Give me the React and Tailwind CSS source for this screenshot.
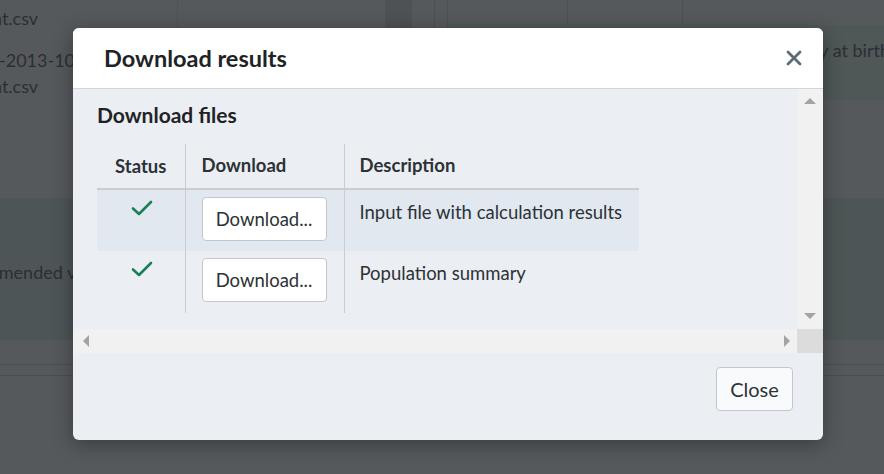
import React from 'react';

const Check = () => (
    <svg width="22" height="16" viewBox="0 0 22 16" fill="none">
        <path d="M2 8.5 L8 14 L20 2" stroke="#1b7f56" strokeWidth="2.6" strokeLinecap="round" strokeLinejoin="round" />
    </svg>
);

const Backdrop = () => (
    <div className="absolute inset-0 bg-[#56595c] text-[#2b2f33] text-[18px]">
        {/* faint page behind the overlay */}
        <div className="flex h-[100px]">
            <div className="w-[178px] border-r border-[#4f5356] flex flex-col pt-[5px] leading-[26px]">
                <span className="-ml-[8px]">nt.csv</span>
                <span className="mt-[16px] -ml-[1px]">-2013-10</span>
                <span className="-ml-[8px]">nt.csv</span>
            </div>
            <div className="w-[207px]" />
            <div className="w-[27px] bg-[#4f5254]" />
            <div className="w-[23px] border-r border-[#4c5053]" />
            <div className="w-[13px] border-r border-[#4c5053]" />
            <div className="flex-1 flex flex-col">
                <div className="h-[25px] flex">
                    <div className="w-[120px] border-r border-[#4c5053]" />
                    <div className="w-[115px] border-r border-[#4c5053]" />
                </div>
                <div className="flex-1 bg-[#4f5757] flex justify-end items-start pt-[12px] overflow-hidden whitespace-nowrap">
                    <span className="-mr-[6px]">y at birth</span>
                </div>
            </div>
        </div>
        <div className="h-[20px] bg-[#55595b]" />
        <div className="h-[78px]" />
        <div className="h-[142px] bg-[#4e5556] flex items-center">
            <span className="-ml-[16px] mt-[6px]">mmended v</span>
        </div>
        <div className="h-[25px] border-b border-[#4a4e51]" />
        <div className="h-[11px] border-b border-[#4a4e51]" />
    </div>
);

export default function App() {
    const rows = [
        { desc: 'Input file with calculation results', shaded: true },
        { desc: 'Population summary', shaded: false },
    ];

    return (
        <div className="relative w-[884px] h-[474px] overflow-hidden" style={{ fontFamily: 'Lato, "Noto Sans", sans-serif' }}>
            <Backdrop />

            {/* modal */}
            <div className="absolute inset-0 pl-[73px] pt-[28px]">
                <div className="w-[750px] h-[412px] rounded-[6px] overflow-hidden bg-[#ebeff3] flex flex-col shadow-[0_4px_20px_rgba(0,0,0,0.35)]">
                    <div className="h-[61px] bg-white border-b border-[#d3d6d9] flex items-center justify-between pl-[31px] pr-[21px]">
                        <h2 className="text-[23.5px] font-bold text-[#1f2326] pt-[1px]">Download results</h2>
                        <svg width="16" height="16" viewBox="0 0 16 16">
                            <path d="M2 2 L14 14 M14 2 L2 14" stroke="#5b6b77" strokeWidth="2.8" strokeLinecap="round" />
                        </svg>
                    </div>

                    <div className="flex h-[240px]">
                        <div className="w-[724px] pl-[24px] pt-[13px]">
                            <h3 className="text-[21px] font-bold text-[#1f2326] leading-[26px]">Download files</h3>
                            <table className="mt-[16px] border-collapse text-[18.5px] text-[#2d3236]">
                                <thead>
                                    <tr className="h-[45px] border-b-2 border-[#c9cdd1]">
                                        <th className="w-[88px] font-bold text-center align-middle pt-[1px]">Status</th>
                                        <th className="w-[159px] font-bold text-left pl-[16px] border-l border-[#c9cdd1]">Download</th>
                                        <th className="w-[295px] font-bold text-left pl-[15px] border-l border-[#c9cdd1]">Description</th>
                                    </tr>
                                </thead>
                                <tbody>
                                    {rows.map((r, i) => (
                                        <tr key={i} className={`${r.shaded ? 'bg-[#e1e8f0]' : ''} h-[62px]`}>
                                            <td className="align-top text-center pt-[10px]">
                                                <div className="flex justify-center pl-[2px]"><Check /></div>
                                            </td>
                                            <td className="align-top pl-[16px] pt-[7px] border-l border-[#c9cdd1]">
                                                <button className="w-[125px] h-[44px] bg-white border border-[#c3c7cb] rounded-[4px] text-[18.5px] text-[#2d3236] pt-[1px]">
                                                    Download...
                                                </button>
                                            </td>
                                            <td className="align-top pl-[15px] pt-[9px] border-l border-[#c9cdd1] whitespace-nowrap">{r.desc}</td>
                                        </tr>
                                    ))}
                                </tbody>
                            </table>
                        </div>
                        {/* vertical scrollbar */}
                        <div className="w-[26px] bg-[#f1f1f1] flex flex-col items-center justify-between pt-[9px] pb-[10px]">
                            <div className="w-0 h-0 border-l-[6px] border-r-[6px] border-b-[6px] border-l-transparent border-r-transparent border-b-[#a3a3a3]" />
                            <div className="w-0 h-0 border-l-[6px] border-r-[6px] border-t-[6px] border-l-transparent border-r-transparent border-t-[#a3a3a3]" />
                        </div>
                    </div>

                    {/* horizontal scrollbar */}
                    <div className="flex h-[24px]">
                        <div className="w-[724px] bg-[#f1f1f1] flex items-center justify-between pl-[10px] pr-[7px]">
                            <div className="w-0 h-0 border-t-[6px] border-b-[6px] border-r-[6px] border-t-transparent border-b-transparent border-r-[#a3a3a3]" />
                            <div className="w-0 h-0 border-t-[6px] border-b-[6px] border-l-[6px] border-t-transparent border-b-transparent border-l-[#a3a3a3]" />
                        </div>
                        <div className="w-[26px] bg-[#dcdcdc]" />
                    </div>

                    <div className="flex-1 flex justify-end items-start pt-[14px] pr-[30px]">
                        <button className="w-[77px] h-[44px] bg-[#f9fafb] border border-[#c3c7cb] rounded-[4px] text-[20px] text-[#2d3236]">
                            Close
                        </button>
                    </div>
                </div>
            </div>
        </div>
    );
}
